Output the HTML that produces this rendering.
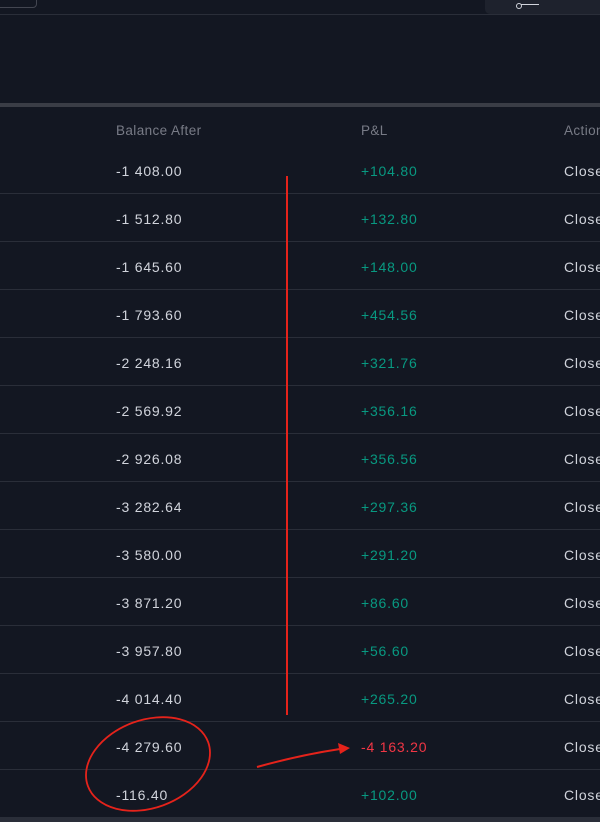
<!DOCTYPE html><html><head><style>
body{margin:0;width:600px;height:822px;background:#131722;font-family:"Liberation Sans",sans-serif;overflow:hidden;position:relative}
.t{position:absolute;font-size:14px;color:#d1d4dc;white-space:nowrap;letter-spacing:0.8px}
.row{position:absolute;left:0;width:600px;height:47px;border-bottom:1px solid #2a2e39}
.g{color:#089981}.r{color:#f23645}.h{color:#787b86;font-size:13.5px;letter-spacing:0.4px}
</style></head><body>
<div style="position:absolute;left:-5px;top:-6px;width:40px;height:12px;border:1px solid #434651;border-radius:4px"></div>
<div style="position:absolute;left:0;top:14px;width:600px;height:1px;background:#2a2e39"></div>
<div style="position:absolute;left:485px;top:0;width:120px;height:14px;background:#1e222d;border-radius:0 0 0 5px"></div>
<div style="position:absolute;left:516px;top:3px;width:4px;height:4px;border:1px solid #d1d4dc;border-radius:50%"></div>
<div style="position:absolute;left:521px;top:4px;width:18px;height:1px;background:#d1d4dc"></div>
<div style="position:absolute;left:0;top:103px;width:600px;height:4px;background:#3a3d46"></div>
<div class="t h" style="left:116px;top:123px">Balance After</div>
<div class="t h" style="left:361px;top:123px">P&amp;L</div>
<div class="t h" style="left:564px;top:123px">Actions</div>
<div id="rows"></div>
<script>
var d=[["-1 408.00","+104.80"],["-1 512.80","+132.80"],["-1 645.60","+148.00"],["-1 793.60","+454.56"],["-2 248.16","+321.76"],["-2 569.92","+356.16"],["-2 926.08","+356.56"],["-3 282.64","+297.36"],["-3 580.00","+291.20"],["-3 871.20","+86.60"],["-3 957.80","+56.60"],["-4 014.40","+265.20"],["-4 279.60","-4 163.20"],["-116.40","+102.00"]];
var h="";d.forEach(function(x,i){var y=146+i*48;h+='<div class="row" style="top:'+y+'px"></div><div class="t" style="left:116px;top:'+(y+17)+'px">'+x[0]+'</div><div class="t '+(x[1][0]=="-"?"r":"g")+'" style="left:361px;top:'+(y+17)+'px">'+x[1]+'</div><div class="t" style="left:564px;top:'+(y+17)+'px">Close</div>';});
document.getElementById("rows").innerHTML=h;
</script>
<div style="position:absolute;left:0;top:818px;width:600px;height:4px;background:#2a2e39"></div>
<svg style="position:absolute;left:0;top:0" width="600" height="822">
<line x1="287" y1="176" x2="287" y2="715" stroke="#e5231b" stroke-width="2"/>
<ellipse cx="148" cy="764" rx="64" ry="44" transform="rotate(-20 148 764)" fill="none" stroke="#e5231b" stroke-width="1.8"/>
<path d="M257 767 Q300 755 340 749" fill="none" stroke="#e5231b" stroke-width="2"/>
<path d="M350 748 L338 743 L340 754 Z" fill="#e5231b"/>
</svg>
</body></html>
